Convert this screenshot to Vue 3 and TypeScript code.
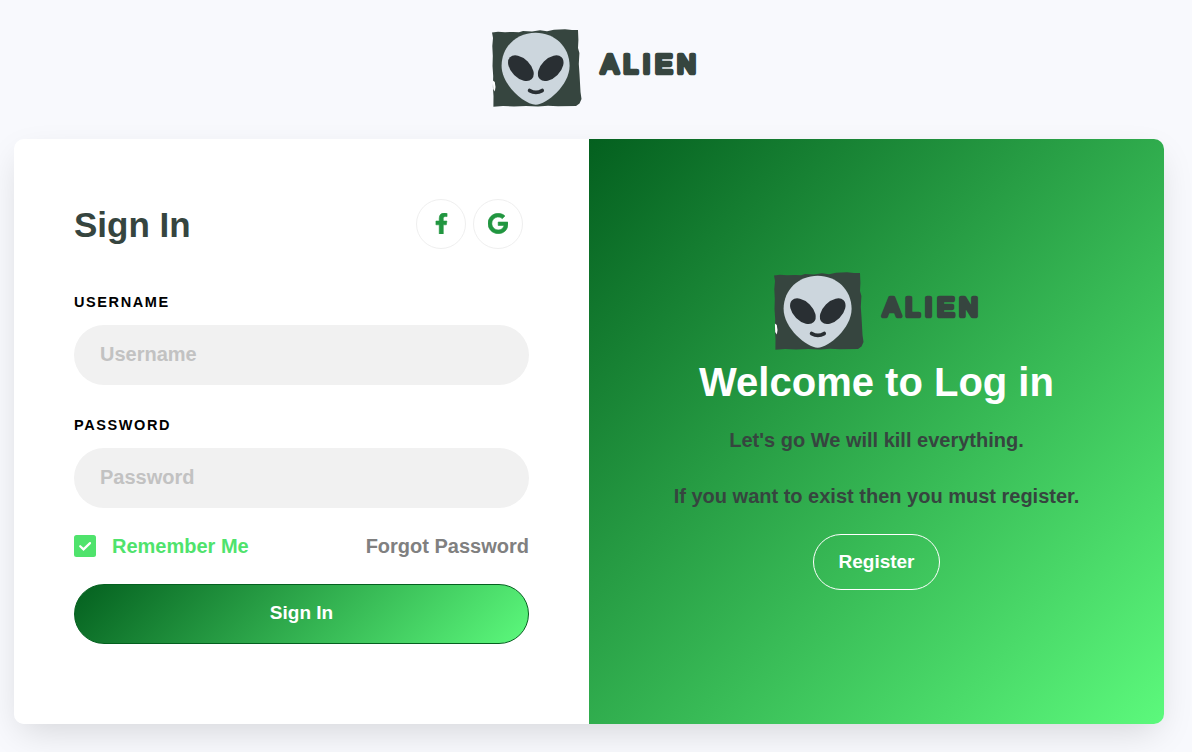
<script setup lang="ts">
import { defineComponent, h, ref } from 'vue'

const username = ref('')
const password = ref('')
const remember = ref(true)

const AlienLogo = defineComponent({
  name: 'AlienLogo',
  setup() {
    const ink = '#36453f'
    const eye = '#292f33'
    return () =>
      h('svg', { width: 208, height: 80, viewBox: '0 0 208 80', role: 'img', 'aria-label': 'Alien' }, [
        h('path', {
          fill: ink,
          d: 'M0 4.500L6 3.800L13 4.200L21 3.900L27 4.200L31 3L40 3.400L48 2.200L55 3.200L62 1.800L73 1.300L80 2L86 2L86.400 12L86 20L87.400 25L86.800 36L87.500 46L88 55L88.500 64L89.500 71L87.500 75.500L84 78L66 78.300L56 77.800L46 78.500L34 77.900L22 78.400L11 78L1.400 78.700L1.500 68L.9 59L1.200 48L.5 38L.8 28L.3 18L1 10Z',
        }),
        h('path', { fill: '#fff', d: 'M.9 52.500L2.800 54L3.500 59L2.800 63.500L1.200 61Z' }),
        h('path', {
          fill: '#ccd6dd',
          d: 'M43.700 4.700C62.500 4.700 77.600 18.500 77.600 38c0 19-23 38.700-33.900 38.700S9.600 57 9.600 38C9.600 18.500 24.700 4.700 43.700 4.700z',
        }),
        h('ellipse', { cx: 28.9, cy: 40.2, rx: 9.600, ry: 15.400, fill: eye, transform: 'rotate(-45 28.900 40.200)' }),
        h('ellipse', { cx: 58.7, cy: 40.2, rx: 9.600, ry: 15.400, fill: eye, transform: 'rotate(45 58.700 40.200)' }),
        h('path', { d: 'M37.700 62.600q6.200 3.600 12.400 0', fill: 'none', stroke: eye, 'stroke-width': 3.900, 'stroke-linecap': 'round' }),
        h('text', {
          x: '109.2 131.400 151 163.200 185.300', y: 44.8, fill: ink, stroke: ink, 'stroke-width': 4.700,
          'stroke-linejoin': 'round', 'stroke-linecap': 'round',
          'font-family': 'Liberation Sans, Arial, sans-serif', 'font-weight': 400, 'font-size': 25.500,
        }, 'ALIEN'),
      ])
  },
})
</script>

<template>
  <main class="page">
    <header class="brand"><AlienLogo /></header>
    <section class="card">
      <form class="login" @submit.prevent>
        <div class="heading">
          <h3>Sign In</h3>
          <div class="social">
            <a href="#" aria-label="Facebook">
              <svg width="13" height="21" viewBox="0 0 320 512"><path d="M279 288l14-93h-89v-60c0-25 12-50 52-50h41V7s-37-7-72-7c-73 0-121 44-121 125v70H23v93h81v224h100V288z" /></svg>
            </a>
            <a href="#" aria-label="Google">
              <svg width="20" height="21" viewBox="0 0 488 512"><path d="M488 262c0 141-97 242-240 242C111 504 0 393 0 256S111 8 248 8c67 0 123 24 166 65l-67 65C259 53 94 117 94 256c0 86 69 156 154 156 98 0 135-70 141-107H248v-85h236c2 13 4 25 4 42z" /></svg>
            </a>
          </div>
        </div>
        <label for="username">Username</label>
        <input id="username" v-model="username" class="field" type="text" placeholder="Username" />
        <label for="password">Password</label>
        <input id="password" v-model="password" class="field" type="password" placeholder="Password" />
        <div class="options">
          <label class="remember">
            <input v-model="remember" type="checkbox" />
            <svg width="22" height="22" viewBox="0 0 22 22">
              <rect width="22" height="22" rx="2.500" />
              <path v-if="remember" d="M6.200 11.200l3.300 3.200 6.500-6.300" />
            </svg>
            <span>Remember Me</span>
          </label>
          <a href="#">Forgot Password</a>
        </div>
        <button class="submit" type="submit">Sign In</button>
      </form>
      <aside class="welcome">
        <AlienLogo />
        <h2>Welcome to Log in</h2>
        <p>Let's go We will kill everything.</p>
        <p>If you want to exist then you must register.</p>
        <a class="register" href="#">Register</a>
      </aside>
    </section>
  </main>
</template>

<style>
body { margin: 0; background: #f8f9fd; overflow: hidden; }
</style>

<style scoped>
* { box-sizing: border-box; }
.page {
  width: 1192px;
  height: 752px;
  padding: 28px 28px 28px 14px;
  background: #f8f9fd;
  font: 700 20px/1.5 "Liberation Sans", Arial, sans-serif;
  overflow: hidden;
}
.page a { text-decoration: none; }
.brand { height: 111px; padding-left: 478px; }
.brand svg { display: block; }
.card {
  display: flex;
  height: 585px;
  border-radius: 10px;
  box-shadow: 0 13px 36px -7px rgba(0, 0, 0, .15);
}
.login {
  width: 575px;
  padding: 60px;
  background: #fff;
  border-radius: 10px 0 0 10px;
}
.heading { display: flex; justify-content: space-between; height: 91px; }
h3 { margin: 0; padding-top: 5px; font-size: 35px; line-height: 42px; color: #36453f; }
.social { display: flex; gap: 7px; padding-right: 6px; }
.social a {
  display: flex;
  align-items: center;
  justify-content: center;
  width: 50px;
  height: 50px;
  padding-bottom: 2px;
  border: 1px solid #efefef;
  border-radius: 50%;
}
.social svg { fill: #219640; stroke: #219640; stroke-width: 14px; }
.login > label {
  display: block;
  height: 35px;
  padding-top: 1px;
  font-size: 14.5px;
  line-height: 22px;
  letter-spacing: 1.6px;
  text-transform: uppercase;
  color: #000;
}
.field {
  display: block;
  width: 100%;
  height: 60px;
  margin-bottom: 28px;
  padding: 0 26px 2px;
  border: 0;
  border-radius: 30px;
  background: #f1f1f1;
  font: inherit;
  outline: none;
}
.field::placeholder { color: #c2c2c2; opacity: 1; }
.options { display: flex; justify-content: space-between; height: 53px; margin-top: -5px; }
.options a { color: #808080; }
.remember { display: flex; color: #4fe36c; }
.remember input { position: absolute; opacity: 0; }
.remember svg { margin: 4px 16px 0 0; }
.remember rect { fill: #4fe36c; }
.remember path { fill: none; stroke: #fff; stroke-width: 2.2; stroke-linecap: round; }
.submit {
  display: block;
  width: 100%;
  height: 60px;
  padding: 0 0 2px;
  border: 1px solid #04601f;
  border-radius: 30px;
  background: linear-gradient(135deg, #04601f 0%, #5cf97c 100%);
  color: #fff;
  font: 700 19px/30px "Liberation Sans", Arial, sans-serif;
}
.welcome {
  display: flex;
  flex-direction: column;
  align-items: center;
  width: 575px;
  padding-top: 132px;
  border-radius: 0 10px 10px 0;
  background: linear-gradient(135deg, #04601f 0%, #5cf97c 100%);
}
.welcome svg { margin-left: 3px; }
h2 { margin: 7px 0 16px; font-size: 40px; line-height: 48px; color: #fff; }
p { margin: 0 0 20px; line-height: 36px; color: #36453f; }
.register {
  width: 127px;
  height: 56px;
  border: 1px solid #fff;
  border-radius: 30px;
  color: #fff;
  font-size: 19px;
  line-height: 53px;
  text-align: center;
}
</style>
